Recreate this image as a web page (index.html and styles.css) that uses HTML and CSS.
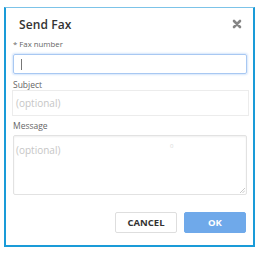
FILE: index.html
```html
<!DOCTYPE html>
<html>
<head>
<meta charset="utf-8">
<link rel="stylesheet" href="styles.css">
</head>
<body>
<div class="dialog">
  <div class="header">
    <span class="title">Send Fax</span>
    <svg class="close" width="10" height="10" viewBox="0 0 10 10"><path d="M2 2 L8 8 M8 2 L2 8" stroke="#858585" stroke-width="2.6" stroke-linecap="round"/></svg>
  </div>
  <div class="label first">* Fax number</div>
  <div class="input focus"><span class="caret"></span></div>
  <div class="label subj">Subject</div>
  <div class="input plain"><span class="ph">(optional)</span></div>
  <div class="label msg">Message</div>
  <div class="area-wrap">
    <textarea class="area" placeholder="(optional)"></textarea>
    <span class="counter">0</span>
    <svg class="grip" width="5" height="5" viewBox="0 0 5 5"><path d="M5 0 L0 5 M5 2.5 L2.5 5" stroke="#bbb" stroke-width="0.8"/></svg>
  </div>
  <div class="actions">
    <button class="btn cancel">CANCEL</button>
    <button class="btn ok">OK</button>
  </div>
</div>
</body>
</html>
```
FILE: styles.css
```css
html, body { margin: 0; padding: 0; background: #fff; }
body { font-family: "Open Sans", "Liberation Sans", sans-serif; }
.dialog {
  box-sizing: border-box;
  margin: 7px 0 0 4px;
  width: 251px;
  height: 240px;
  border: 2px solid #1a9bd8;
  border-top: 1px solid #7cc3e8;
  padding: 0 6px 0 7px;
  background: #fff;
}
.header {
  display: flex;
  align-items: center;
  justify-content: space-between;
  margin-top: 8px;
  height: 16px;
  padding: 0 5px 0 6px;
}
.title { font-size: 12px; font-weight: 600; color: #333; letter-spacing: 0.1px; }
.close { display: block; }
.label { font-size: 8.5px; color: #666; line-height: 10px; height: 10px; }
.label.first { margin-top: 7px; font-size: 7.8px; }
.label.subj { margin-top: 6px; }
.label.msg { margin-top: 5px; }
.input { box-sizing: border-box; display: flex; align-items: center; }
.input.focus {
  margin-top: 5px;
  height: 20px;
  border: 1px solid #a8c8f2;
  box-shadow: 0 0 2px 1px #d6e6fb;
  border-radius: 2px;
  padding-left: 7px;
}
.caret { width: 1px; height: 11px; background: #777; }
.input.plain {
  margin-top: 0;
  margin-left: -1px;
  margin-right: -2px;
  height: 26px;
  border: 1px solid #ececec;
  padding-left: 3px;
}
.ph { font-size: 10px; color: #c6c6c6; }
.area-wrap { position: relative; margin-top: 4px; }
.area {
  display: block;
  box-sizing: border-box;
  width: 100%;
  height: 60px;
  border: 1px solid #e2e2e2;
  border-radius: 2px;
  padding: 7px 2px;
  font-family: "Open Sans", "Liberation Sans", sans-serif;
  font-size: 10px;
  resize: none;
  outline: none;
  box-shadow: inset 0 1px 2px #f0f0f0;
}
.area::placeholder { color: #c6c6c6; }
.counter { position: absolute; left: 157px; top: 7px; font-size: 6px; color: #d8d8d8; }
.grip { position: absolute; right: 2px; bottom: 2px; }
.actions {
  display: flex;
  justify-content: flex-end;
  gap: 7px;
  margin-top: 17px;
  padding-right: 1px;
}
.btn {
  box-sizing: border-box;
  width: 62px;
  height: 21px;
  font-family: "Open Sans", "Liberation Sans", sans-serif;
  font-size: 9.5px;
  font-weight: 700;
  border-radius: 2px;
  padding: 0;
}
.cancel { background: #fff; border: 1px solid #dedede; color: #333; }
.ok { background: #6fa9ea; border: 1px solid #6fa9ea; color: #fff; }
```
